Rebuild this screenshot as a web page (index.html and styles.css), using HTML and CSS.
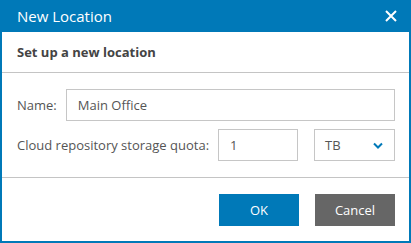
FILE: index.html
```html
<!DOCTYPE html>
<html lang="en">
<head>
  <meta charset="UTF-8" />
  <title>New Location</title>
  <link rel="stylesheet" href="styles.css">
</head>
<body>
  <div class="dialog">
    <div class="dialog-header">
      <span class="dialog-title">New Location</span>
      <button type="button" class="close-btn" aria-label="Close">
        <svg width="12" height="12" viewBox="0 0 12 12">
          <path d="M1 1 L11 11 M11 1 L1 11" stroke="#fff" stroke-width="2" fill="none"/>
        </svg>
      </button>
    </div>

    <div class="dialog-subtitle">Set up a new location</div>

    <form class="dialog-form">
      <div class="form-row">
        <label for="name">Name:</label>
        <input type="text" id="name" class="text-input name-input" value="Main Office">
      </div>
      <div class="form-row">
        <label for="quota">Cloud repository storage quota:</label>
        <input type="text" id="quota" class="text-input quota-input" value="1">
        <div class="unit-select">
          <span>TB</span>
          <svg width="10" height="7" viewBox="0 0 10 7">
            <path d="M1 1.5 L5 5.5 L9 1.5" stroke="#0079b8" stroke-width="2" fill="none"/>
          </svg>
        </div>
      </div>
    </form>

    <div class="dialog-footer">
      <button type="button" class="btn btn-ok">OK</button>
      <button type="button" class="btn btn-cancel">Cancel</button>
    </div>
  </div>
</body>
</html>
```

FILE: styles.css
```css
body {
    margin: 0;
    font-family: 'Open Sans', 'Noto Sans', sans-serif;
    color: #444;
    background: #fff;
}

.dialog {
    width: 411px;
    height: 243px;
    box-sizing: border-box;
    border: 2px solid #0079b8;
    border-top: 0;
    display: flex;
    flex-direction: column;
}

.dialog-header {
    background: #0079b8;
    height: 32px;
    margin: 0 -2px;
    padding: 0 14px 0 17px;
    display: flex;
    align-items: center;
    justify-content: space-between;
}
.dialog-title {
    color: #fff;
    font-size: 15px;
}
.close-btn {
    background: none;
    border: none;
    padding: 0;
    width: 12px;
    height: 12px;
    display: flex;
    cursor: pointer;
}

.dialog-subtitle {
    height: 40px;
    line-height: 40px;
    padding-left: 15px;
    font-size: 13px;
    font-weight: bold;
    color: #444;
    border-bottom: 1px solid #c4c4c4;
}

.dialog-form {
    padding: 16px 14px 16px 15px;
    display: flex;
    flex-direction: column;
    gap: 8px;
    border-bottom: 1px solid #c4c4c4;
    margin: 0;
}
.form-row {
    display: flex;
    align-items: center;
}
.form-row label {
    font-size: 13px;
    color: #555;
    margin-right: 9px;
    white-space: nowrap;
    flex-shrink: 0;
}
.text-input {
    height: 32px;
    box-sizing: border-box;
    border: 1px solid #c6c6c6;
    padding: 0 11px;
    font-family: inherit;
    font-size: 13px;
    color: #555;
    outline: none;
    min-width: 0;
}
.name-input {
    flex: 1;
}
.quota-input {
    width: 80px;
}
.unit-select {
    width: 81px;
    height: 32px;
    box-sizing: border-box;
    margin-left: 16px;
    border: 1px solid #c6c6c6;
    padding: 0 11px 0 10px;
    display: flex;
    align-items: center;
    justify-content: space-between;
    font-size: 13px;
    color: #555;
}

.dialog-footer {
    flex: 1;
    display: flex;
    justify-content: flex-end;
    align-items: flex-start;
    gap: 16px;
    padding: 16px 14px 0 0;
}
.btn {
    width: 80px;
    height: 32px;
    border: none;
    color: #fff;
    font-family: inherit;
    font-size: 13px;
    cursor: pointer;
}
.btn-ok {
    background: #0079b8;
}
.btn-cancel {
    background: #666;
}
```
